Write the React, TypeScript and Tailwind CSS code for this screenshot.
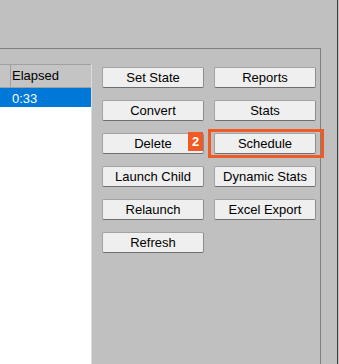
const buttons: [string, string | null][] = [
  ['Set State', 'Reports'],
  ['Convert', 'Stats'],
  ['Delete', 'Schedule'],
  ['Launch Child', 'Dynamic Stats'],
  ['Relaunch', 'Excel Export'],
  ['Refresh', null],
];

const Btn = ({ label }: { label: string }) => (
  <button className="h-[21px] w-[102px] rounded-[2px] border border-[#a3a3a3] border-b-[#6e6e6e] border-r-[#8c8c8c] bg-[#efefef] text-[13px] leading-none text-black">
    {label}
  </button>
);

export default function App() {
  return (
    <div
      className="flex h-[364px] w-[339px] overflow-hidden bg-[#c0c0c0]"
      style={{ fontFamily: '"Liberation Sans", Arial, sans-serif' }}
    >
      <div className="flex w-[337px] flex-col">
        <div className="h-[48px] shrink-0" />
        <div className="relative flex flex-1 w-[321px] border-t border-r border-[#808080]">
          {/* table */}
          <div className="flex w-[92px] shrink-0 flex-col pt-[15px]">
            <div className="flex flex-1 flex-col border-r border-[#dcdcdc] bg-white">
              <div className="flex h-[24px] border-y border-[#a0a0a0] bg-[#c4c4c4] text-[13px] text-black">
                <div className="w-[11px] border-r border-[#a0a0a0]" />
                <div className="flex-1 pl-[1px] pt-[1px]">Elapsed</div>
              </div>
              <div className="flex h-[19px] bg-[#0078d7] text-[13px] text-white">
                <div className="w-[12px]" />
                <div className="pt-[1px]">0:33</div>
              </div>
            </div>
          </div>

          {/* buttons */}
          <div className="flex flex-col gap-[12px] pl-[10px] pt-[18px]">
            {buttons.map(([a, b]) => (
              <div key={a} className="flex gap-[10px]">
                <Btn label={a} />
                {b && <Btn label={b} />}
              </div>
            ))}
          </div>

          {/* callout */}
          <div className="absolute left-[188px] top-[83px] flex h-[19px] w-[15px] items-center justify-center bg-[#f05a24] text-[13px] font-bold text-white">
            2
          </div>
          <div className="absolute left-[208px] top-[80px] h-[29px] w-[116px] border-[3px] border-[#f05a24]" />
        </div>
      </div>
      <div className="w-[1px] bg-[#3c3c3c]" />
      <div className="w-[1px] bg-[#c0c0c0]" />
    </div>
  );
}
